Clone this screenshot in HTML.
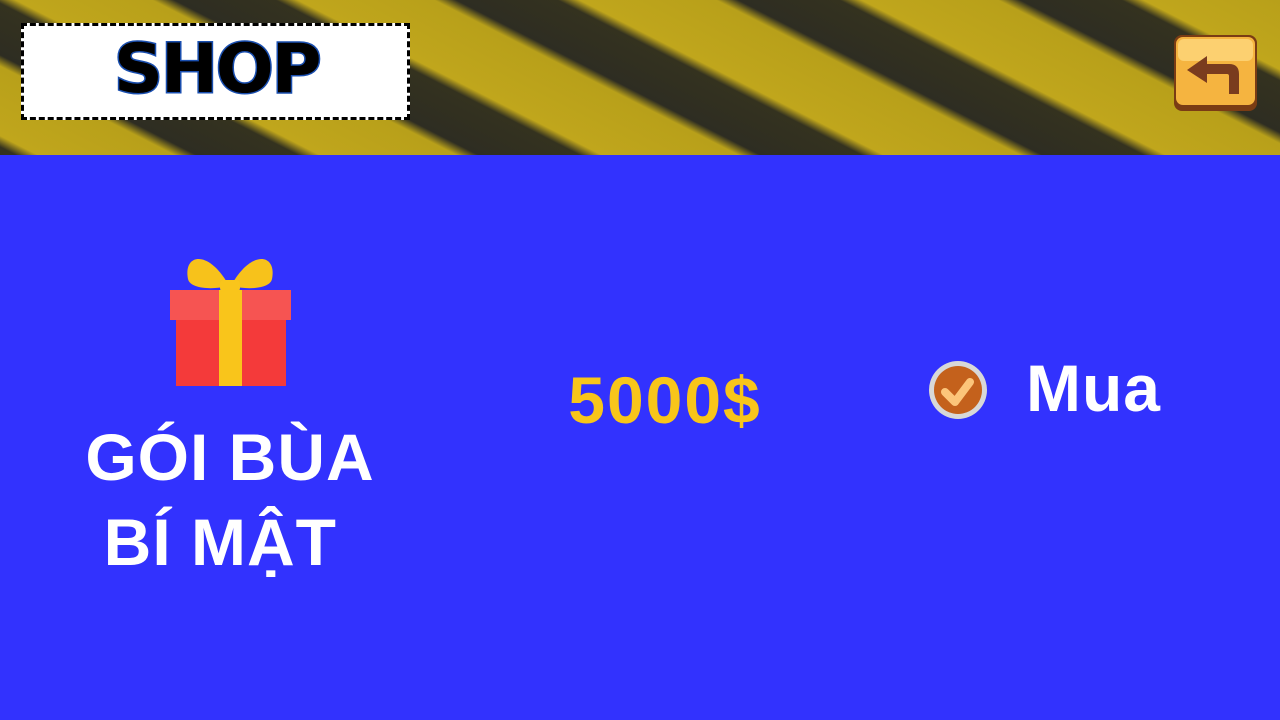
<!DOCTYPE html>
<html><head><meta charset="utf-8"><style>
body{margin:0;width:1280px;height:720px;overflow:hidden;background:#3232fe;font-family:"Liberation Sans","DejaVu Sans",sans-serif;position:relative}
.top{position:absolute;left:0;top:0;width:1280px;height:155px;background:repeating-linear-gradient(207deg,#b8a01a 0px,#c0a61c 62px,#34321f 72px,#2e2d22 118px,#b8a01a 128px)}
.shop{position:absolute;left:21px;top:23px;width:389px;height:97px;background:#fff;border:3px dashed #000;box-sizing:border-box}
.shop span{position:absolute;left:90px;top:4px;font:bold 68px "DejaVu Sans",sans-serif;color:#000;-webkit-text-stroke:3px #1a4fb0;paint-order:stroke fill;letter-spacing:-2px}
.t{position:absolute;color:#fff;font-weight:bold;text-align:center;white-space:nowrap}
</style></head><body>
<div class="top"></div>
<div class="shop"><span>SHOP</span></div>
<svg style="position:absolute;left:1173px;top:32px" width="86" height="80" viewBox="0 0 86 80">
<rect x="1" y="3" width="83" height="76" rx="8" fill="#7a3c14"/>
<rect x="3" y="5" width="79" height="68" rx="7" fill="#f5b440"/>
<rect x="5" y="7" width="75" height="22" rx="6" fill="#fcd070"/>
<path d="M14 38 L34 24 L34 32 L56 32 Q66 32 66 42 L66 62 L56 62 L56 44 Q56 42 54 42 L34 42 L34 51 Z" fill="#7a3c1e"/>
</svg>
<svg style="position:absolute;left:168px;top:254px" width="124" height="132" viewBox="0 0 124 132">
<path d="M60 30 C40 -5 15 0 20 25 C22 35 45 36 60 32 Z" fill="#f7c21b"/>
<path d="M64 30 C84 -5 109 0 104 25 C102 35 79 36 64 32 Z" fill="#f7c21b"/>
<rect x="2" y="36" width="121" height="30" fill="#f65452"/>
<rect x="8" y="66" width="110" height="66" fill="#f43a3a"/>
<rect x="51" y="36" width="23" height="96" fill="#f9c51b"/>
<rect x="52" y="26" width="20" height="12" rx="4" fill="#f9c51b"/>
</svg>
<div class="t" style="left:30px;top:415px;width:400px;font-size:66px;line-height:85px;letter-spacing:1px">GÓI BÙA<br>BÍ MẬT&nbsp;</div>
<div class="t" style="left:515px;top:362px;width:300px;font-size:66px;letter-spacing:2px;color:#f8c51a">5000$</div>
<svg style="position:absolute;left:928px;top:360px" width="60" height="60" viewBox="0 0 60 60">
<circle cx="30" cy="30" r="29" fill="#d8d8d8"/><circle cx="30" cy="30" r="24" fill="#c4611c"/>
<path d="M17 32 L27 42 L42 22" stroke="#fcc57a" stroke-width="8" fill="none" stroke-linecap="round" stroke-linejoin="round"/>
</svg>
<div class="t" style="left:1026px;top:350px;font-size:66px;letter-spacing:1px">Mua</div>
</body></html>
